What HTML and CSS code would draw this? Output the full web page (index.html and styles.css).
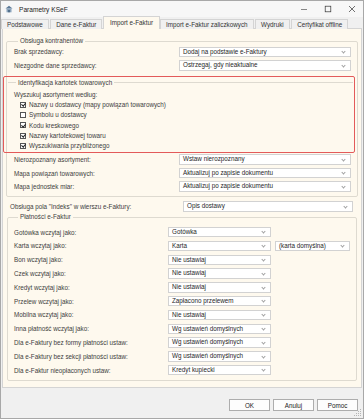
FILE: index.html
```html
<!DOCTYPE html>
<html lang="pl">
<head>
  <meta charset="UTF-8">
  <title>Parametry KSeF</title>
  <link rel="stylesheet" href="styles.css">
</head>
<body>
  <div class="window">
    <div class="titlebar">
      <svg class="app-icon" width="8" height="8" viewBox="0 0 8 8">
        <path d="M0.5 3.5 L4 0.8 L7.5 3.5 Z" fill="#5a7896"/>
        <rect x="1.5" y="3.5" width="5" height="3.8" fill="#8aa3bb"/>
        <rect x="3.3" y="5" width="1.4" height="2.3" fill="#3d5a78"/>
      </svg>
      <span class="title">Parametry KSeF</span>
      <div class="controls">
        <svg width="8" height="8" viewBox="0 0 8 8"><path d="M1 4.5 H7" stroke="#555" stroke-width="0.7"/></svg>
        <svg width="8" height="8" viewBox="0 0 8 8"><rect x="1.2" y="1.2" width="5.6" height="5.6" fill="none" stroke="#333" stroke-width="0.7"/></svg>
        <svg width="8" height="8" viewBox="0 0 8 8"><path d="M1 1 L7 7 M7 1 L1 7" stroke="#333" stroke-width="0.7"/></svg>
      </div>
    </div>

    <div class="tabs">
      <div class="tab">Podstawowe</div>
      <div class="tab">Dane e-Faktur</div>
      <div class="tab active">Import e-Faktur</div>
      <div class="tab">Import e-Faktur zaliczkowych</div>
      <div class="tab">Wydruki</div>
      <div class="tab">Certyfikat offline</div>
    </div>

    <div class="panel">
      <fieldset class="group group-main">
        <legend>Obsługa kontrahentów</legend>
        <div class="row">
          <span class="label">Brak sprzedawcy:</span>
          <div class="select">Dodaj na podstawie e-Faktury</div>
        </div>
        <div class="row">
          <span class="label">Niezgodne dane sprzedawcy:</span>
          <div class="select">Ostrzegaj, gdy nieaktualne</div>
        </div>

        <div class="highlight">
          <fieldset class="group group-inner">
            <legend>Identyfikacja kartotek towarowych</legend>
            <div class="caption">Wyszukuj asortyment według:</div>
            <div class="check"><span class="box on"></span>Nazwy u dostawcy (mapy powiązań towarowych)</div>
            <div class="check"><span class="box"></span>Symbolu u dostawcy</div>
            <div class="check"><span class="box on"></span>Kodu kreskowego</div>
            <div class="check"><span class="box on"></span>Nazwy kartotekowej towaru</div>
            <div class="check"><span class="box on"></span>Wyszukiwania przybliżonego</div>
          </fieldset>
        </div>

        <div class="row">
          <span class="label">Nierozpoznany asortyment:</span>
          <div class="select">Wstaw nierozpoznany</div>
        </div>
        <div class="row">
          <span class="label">Mapa powiązań towarowych:</span>
          <div class="select">Aktualizuj po zapisie dokumentu</div>
        </div>
        <div class="row">
          <span class="label">Mapa jednostek miar:</span>
          <div class="select">Aktualizuj po zapisie dokumentu</div>
        </div>
      </fieldset>

      <div class="row row-indeks">
        <span class="label">Obsługa pola "Indeks" w wierszu e-Faktury:</span>
        <div class="select">Opis dostawy</div>
      </div>

      <fieldset class="group group-pay">
        <legend>Płatności e-Faktur</legend>
        <div class="row"><span class="label">Gotówka wczytaj jako:</span><div class="select">Gotówka</div></div>
        <div class="row"><span class="label">Karta wczytaj jako:</span><div class="select">Karta</div><div class="select extra">(karta domyślna)</div></div>
        <div class="row"><span class="label">Bon wczytaj jako:</span><div class="select">Nie ustawiaj</div></div>
        <div class="row"><span class="label">Czek wczytaj jako:</span><div class="select">Nie ustawiaj</div></div>
        <div class="row"><span class="label">Kredyt wczytaj jako:</span><div class="select">Nie ustawiaj</div></div>
        <div class="row"><span class="label">Przelew wczytaj jako:</span><div class="select">Zapłacono przelewem</div></div>
        <div class="row"><span class="label">Mobilna wczytaj jako:</span><div class="select">Nie ustawiaj</div></div>
        <div class="row"><span class="label">Inna płatność wczytaj jako:</span><div class="select">Wg ustawień domyślnych</div></div>
        <div class="row"><span class="label">Dla e-Faktury bez formy płatności ustaw:</span><div class="select">Wg ustawień domyślnych</div></div>
        <div class="row"><span class="label">Dla e-Faktury bez sekcji płatności ustaw:</span><div class="select">Wg ustawień domyślnych</div></div>
        <div class="row"><span class="label">Dla e-Faktur nieopłaconych ustaw:</span><div class="select">Kredyt kupiecki</div></div>
      </fieldset>
    </div>

    <div class="footer">
      <button class="btn">OK</button>
      <button class="btn">Anuluj</button>
      <button class="btn">Pomoc</button>
      <svg class="grip" width="8" height="8" viewBox="0 0 8 8">
        <g fill="#b5b5b5">
          <rect x="6" y="0" width="1" height="1"/>
          <rect x="4" y="2" width="1" height="1"/><rect x="6" y="2" width="1" height="1"/>
          <rect x="2" y="4" width="1" height="1"/><rect x="4" y="4" width="1" height="1"/><rect x="6" y="4" width="1" height="1"/>
          <rect x="0" y="6" width="1" height="1"/><rect x="2" y="6" width="1" height="1"/><rect x="4" y="6" width="1" height="1"/><rect x="6" y="6" width="1" height="1"/>
        </g>
      </svg>
    </div>
  </div>
</body>
</html>
```

FILE: styles.css
```css
* { box-sizing: border-box; }
html, body { margin: 0; }
body { font-family: "Liberation Sans", Arial, sans-serif; font-size: 6.3px; color: #3d3d3d; background: #fff; }

.window { width: 364px; height: 419px; border: 1px solid #a8a8a8; background: #f0f0f0; display: flex; flex-direction: column; }

/* title bar */
.titlebar { height: 16px; flex: none; display: flex; align-items: center; padding-left: 4px; background: #f7f7f7; }
.app-icon { margin-right: 6px; }
.title { font-size: 6.6px; color: #1b1b1b; }
.controls { margin-left: auto; display: flex; align-items: center; gap: 16px; padding-right: 7px; }

/* tabs */
.tabs { height: 12px; flex: none; display: flex; align-items: flex-end; padding-left: 0; position: relative; z-index: 1; margin-bottom: -1px; }
.tab { height: 10px; line-height: 9px; padding: 0 5px; border: 1px solid #d4d4d4; border-bottom: none; background: #f0f0f0; color: #333; margin-right: 1.5px; }
.tab.active { height: 13px; line-height: 11px; background: #fef9ee; margin: 0 0 0 -1px; padding: 0 6px; }
.tab.active + .tab { margin-left: 0; }

/* main panel */
.panel { flex: 1; margin: 0 1px; border: 1px solid #d4d4d4; background: #fef9ee; padding: 8px 3px 0 3px; }

.group { margin: 0; padding: 0; border: 1px solid #dedad0; border-radius: 2px; min-width: 0; }
.group legend { padding: 0 2px; margin-left: 4px; line-height: 8px; color: #3d3d3d; }

.group-main { padding: 0 6px 3px 7px; }
.group-pay { margin: 0 1px 0 1px; padding: 4px 6px 3px 6px; }

.row { height: 13.5px; display: flex; align-items: center; }
.label { width: 165px; flex: none; }
.group-pay .row { height: 13.8px; }
.group-pay .label { width: 154px; }
.group-pay .select { width: 103px; flex: none; }
.group-pay .select.extra { width: 75px; margin-left: 4px; }

.row-indeks { margin: 2.3px 5px 0 4px; }
.row-indeks .label { width: 173px; }

.select { flex: 1; height: 10.5px; line-height: 8.5px; border: 1px solid #d2d2d2; background: #fff; padding-left: 3px; color: #262626; position: relative; white-space: nowrap; overflow: hidden; }
.select::after { content: ""; position: absolute; right: 5px; top: 2.5px; width: 2px; height: 2px; border-right: 0.7px solid #a0a0a0; border-bottom: 0.7px solid #a0a0a0; transform: rotate(45deg); }

/* red highlight around the identification box */
.highlight { margin: 4px -4px 0 -11px; border: 1.5px solid #e35a5a; border-radius: 2px; padding: 1.5px 1px 0 4px; }
.group-inner { border: none; border-top: 1px solid #dedad0; border-radius: 0; padding: 3px 0 1px 6px; }
.group-inner legend { margin-left: 2px; }
.caption { height: 10px; line-height: 10px; }
.check { height: 10.3px; display: flex; align-items: center; padding-left: 6px; }
.box { width: 6px; height: 6px; border: 1px solid #555; background: #fff; margin-right: 3px; position: relative; flex: none; }
.box.on::after { content: ""; position: absolute; left: 1px; top: -0.5px; width: 1.6px; height: 3.2px; border-right: 1px solid #222; border-bottom: 1px solid #222; transform: rotate(40deg); }

/* footer */
.footer { height: 30px; flex: none; display: flex; align-items: flex-start; justify-content: flex-end; gap: 3px; padding: 11px 5px 0 0; position: relative; }
.btn { width: 41px; height: 12px; padding: 0; font: inherit; color: #222; background: #fdfdfd; border: 1px solid #adadad; }
.grip { position: absolute; right: 1px; bottom: 1px; }
```
